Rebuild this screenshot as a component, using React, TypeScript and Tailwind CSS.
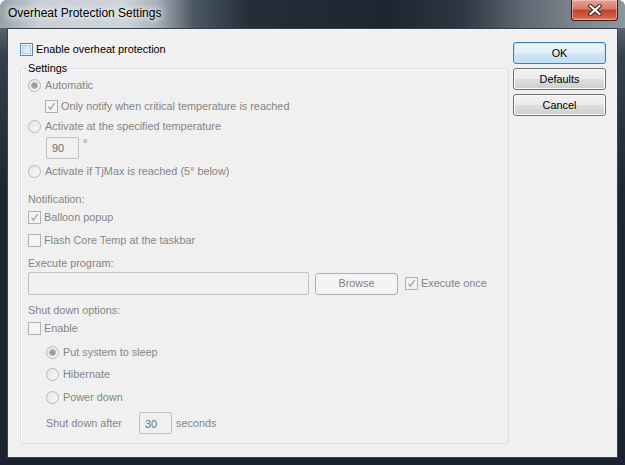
import React from 'react';

const font = "font-['Liberation_Sans',Arial,sans-serif]";
const gray = 'text-[#858585]';

function Check({ checked = false, enabled = false }: { checked?: boolean; enabled?: boolean }) {
  if (enabled) {
    return (
      <span className="box-border flex h-[13px] w-[13px] shrink-0 items-center justify-center border border-[#5a86b0] bg-[#e9f4fc]">
        <span className="h-[9px] w-[9px] border border-[#a9cfee] bg-[linear-gradient(135deg,#c4e2f7_0%,#e4f2fc_100%)]" />
      </span>
    );
  }
  return (
    <span className="box-border flex h-[13px] w-[13px] shrink-0 items-center justify-center border border-[#b1b1b1] bg-[#f4f4f4]">
      {checked && (
        <svg width="9" height="9" viewBox="0 0 9 9">
          <path d="M1.5 4.8 L3.4 7.2 L7.6 1.2" fill="none" stroke="#a5a5a5" strokeWidth="1.4" />
        </svg>
      )}
    </span>
  );
}

function Radio({ checked = false }: { checked?: boolean }) {
  return (
    <span className="box-border flex h-[13px] w-[13px] shrink-0 items-center justify-center rounded-full border border-[#b8b8b8] bg-[linear-gradient(135deg,#e6e6e6_0%,#f8f8f8_100%)]">
      {checked && (
        <span className="h-[7px] w-[7px] rounded-full border border-[#a8a8a8] bg-[radial-gradient(circle,#8e8e8e_0%,#a6a6a6_60%,#c6c6c6_100%)]" />
      )}
    </span>
  );
}

function CheckRow({ label, checked, mt, enabled }: { label: string; checked?: boolean; mt: string; enabled?: boolean }) {
  return (
    <div className={`flex h-[16px] items-center gap-[3px] ${mt}`}>
      <Check checked={checked} enabled={enabled} />
      <span className={enabled ? 'text-black' : gray}>{label}</span>
    </div>
  );
}

function RadioRow({ label, checked, mt }: { label: string; checked?: boolean; mt: string }) {
  return (
    <div className={`flex h-[16px] items-center gap-[4px] ${mt}`}>
      <Radio checked={checked} />
      <span className={gray}>{label}</span>
    </div>
  );
}

function Caption({ text, mt }: { text: string; mt: string }) {
  return <div className={`flex h-[16px] items-center ${gray} ${mt}`}>{text}</div>;
}

function Field({ value, className }: { value?: string; className: string }) {
  return (
    <div className={`box-border flex items-center rounded-[2px] border border-[#c2c2c2] bg-[#f0f0f0] pl-[5px] text-[#6d6d6d] ${className}`}>
      {value}
    </div>
  );
}

function DialogButton({ label, primary }: { label: string; primary?: boolean }) {
  return (
    <div
      className={
        'flex h-[22px] w-[93px] items-center justify-center rounded-[3px] border text-black ' +
        (primary
          ? 'border-[#3c7fb1] bg-[linear-gradient(180deg,#edf6fc_0%,#e2f0fa_48%,#cfe6f5_52%,#c3dff2_100%)] shadow-[inset_0_0_0_1px_#bfe3f8]'
          : 'border-[#707070] bg-[linear-gradient(180deg,#f2f2f2_0%,#ebebeb_48%,#dddddd_52%,#cfcfcf_100%)] shadow-[inset_0_0_0_1px_#fcfcfc]')
      }
    >
      {label}
    </div>
  );
}

export default function App() {
  return (
    <div className={`h-[465px] w-[625px] overflow-hidden rounded-t-[7px] bg-[linear-gradient(180deg,#7b858f_0%,#34404c_12%,#1e2832_40%,#1b242e_100%)] text-[10.85px] ${font}`}>
      {/* title bar */}
      <div className="flex h-[28px] items-start justify-between bg-[linear-gradient(90deg,#97a1aa_0%,#c8cfd6_6%,#cdd4da_20%,#a9b2bb_25%,#4b5763_31%,#232e39_40%,#1c2630_62%,#2c3743_74%,#5f6973_84%,#7f8891_93%,#8d959c_100%)]">
        <div className="pl-[8px] pt-[6px] text-[12px] leading-[15px] text-black [text-shadow:0_0_6px_#ffffff,0_0_10px_#ffffff]">
          Overheat Protection Settings
        </div>
        <div className="mr-[7px] flex h-[21px] w-[47px] items-center justify-center rounded-b-[4px] border border-t-0 border-[#3a1c17] bg-[linear-gradient(180deg,#e6a595_0%,#d37a66_45%,#c2432b_52%,#cf5f47_85%,#e08b6f_100%)] shadow-[inset_0_0_0_1px_rgba(255,210,200,0.5)]">
          <svg width="14" height="12" viewBox="0 0 14 12">
            <path d="M2.5 2 L11.5 10 M11.5 2 L2.5 10" stroke="#3b2420" strokeWidth="4.2" strokeLinecap="square" />
            <path d="M2.5 2 L11.5 10 M11.5 2 L2.5 10" stroke="#ffffff" strokeWidth="2.2" strokeLinecap="square" />
          </svg>
        </div>
      </div>

      {/* client area */}
      <div className="ml-[7px] box-border h-[430px] w-[611px] border border-[#38444f] bg-[#f0f0f0]">
        <div className="flex pl-[12px] pt-[12px]">
          <div className="flex w-[489px] flex-col">
            <CheckRow label="Enable overheat protection" enabled mt="mt-0" />

            <div className="relative mt-[11px] box-border h-[376px] rounded-[3px] border border-[#d5dfe5] pl-[7px] shadow-[inset_1px_1px_0_#ffffff]">
              <span className="absolute left-[6px] top-[-8px] bg-[#f0f0f0] px-[1px] leading-[14px] text-black">Settings</span>

              <RadioRow label="Automatic" checked mt="mt-[8px]" />
              <div className="pl-[17px]">
                <CheckRow label="Only notify when critical temperature is reached" checked mt="mt-[5px]" />
              </div>
              <RadioRow label="Activate at the specified temperature" mt="mt-[4px]" />
              <div className="mt-[3px] flex h-[22px] items-start gap-[4px] pl-[18px]">
                <Field value="90" className="h-[22px] w-[33px]" />
                <span className={`${gray} leading-[12px]`}>°</span>
              </div>
              <RadioRow label="Activate if TjMax is reached (5° below)" mt="mt-[4px]" />

              <Caption text="Notification:" mt="mt-[12px]" />
              <CheckRow label="Balloon popup" checked mt="mt-[2px]" />
              <CheckRow label="Flash Core Temp at the taskbar" mt="mt-[7px]" />

              <Caption text="Execute program:" mt="mt-[7px]" />
              <div className="mt-[1px] flex h-[23px] items-center">
                <Field className="h-[23px] w-[281px]" />
                <div className="ml-[6px] box-border flex h-[22px] w-[83px] items-center justify-center rounded-[3px] border border-[#adb2b5] bg-[#f4f4f4] text-[#838383]">
                  Browse
                </div>
                <div className="ml-[7px] flex items-center gap-[3px]">
                  <Check checked />
                  <span className={gray}>Execute once</span>
                </div>
              </div>

              <Caption text="Shut down options:" mt="mt-[7px]" />
              <CheckRow label="Enable" mt="mt-[2px]" />
              <div className="pl-[18px]">
                <RadioRow label="Put system to sleep" checked mt="mt-[8px]" />
                <RadioRow label="Hibernate" mt="mt-[6px]" />
                <RadioRow label="Power down" mt="mt-[7px]" />
                <div className="mt-[7px] flex h-[22px] items-center">
                  <span className={`${gray} w-[93px]`}>Shut down after</span>
                  <Field value="30" className="h-[22px] w-[33px] items-start pt-[3px]" />
                  <span className={`${gray} ml-[4px]`}>seconds</span>
                </div>
              </div>
            </div>
          </div>

          <div className="ml-[4px] flex flex-col gap-[4px] pt-[1px]">
            <DialogButton label="OK" primary />
            <DialogButton label="Defaults" />
            <DialogButton label="Cancel" />
          </div>
        </div>
      </div>
    </div>
  );
}
